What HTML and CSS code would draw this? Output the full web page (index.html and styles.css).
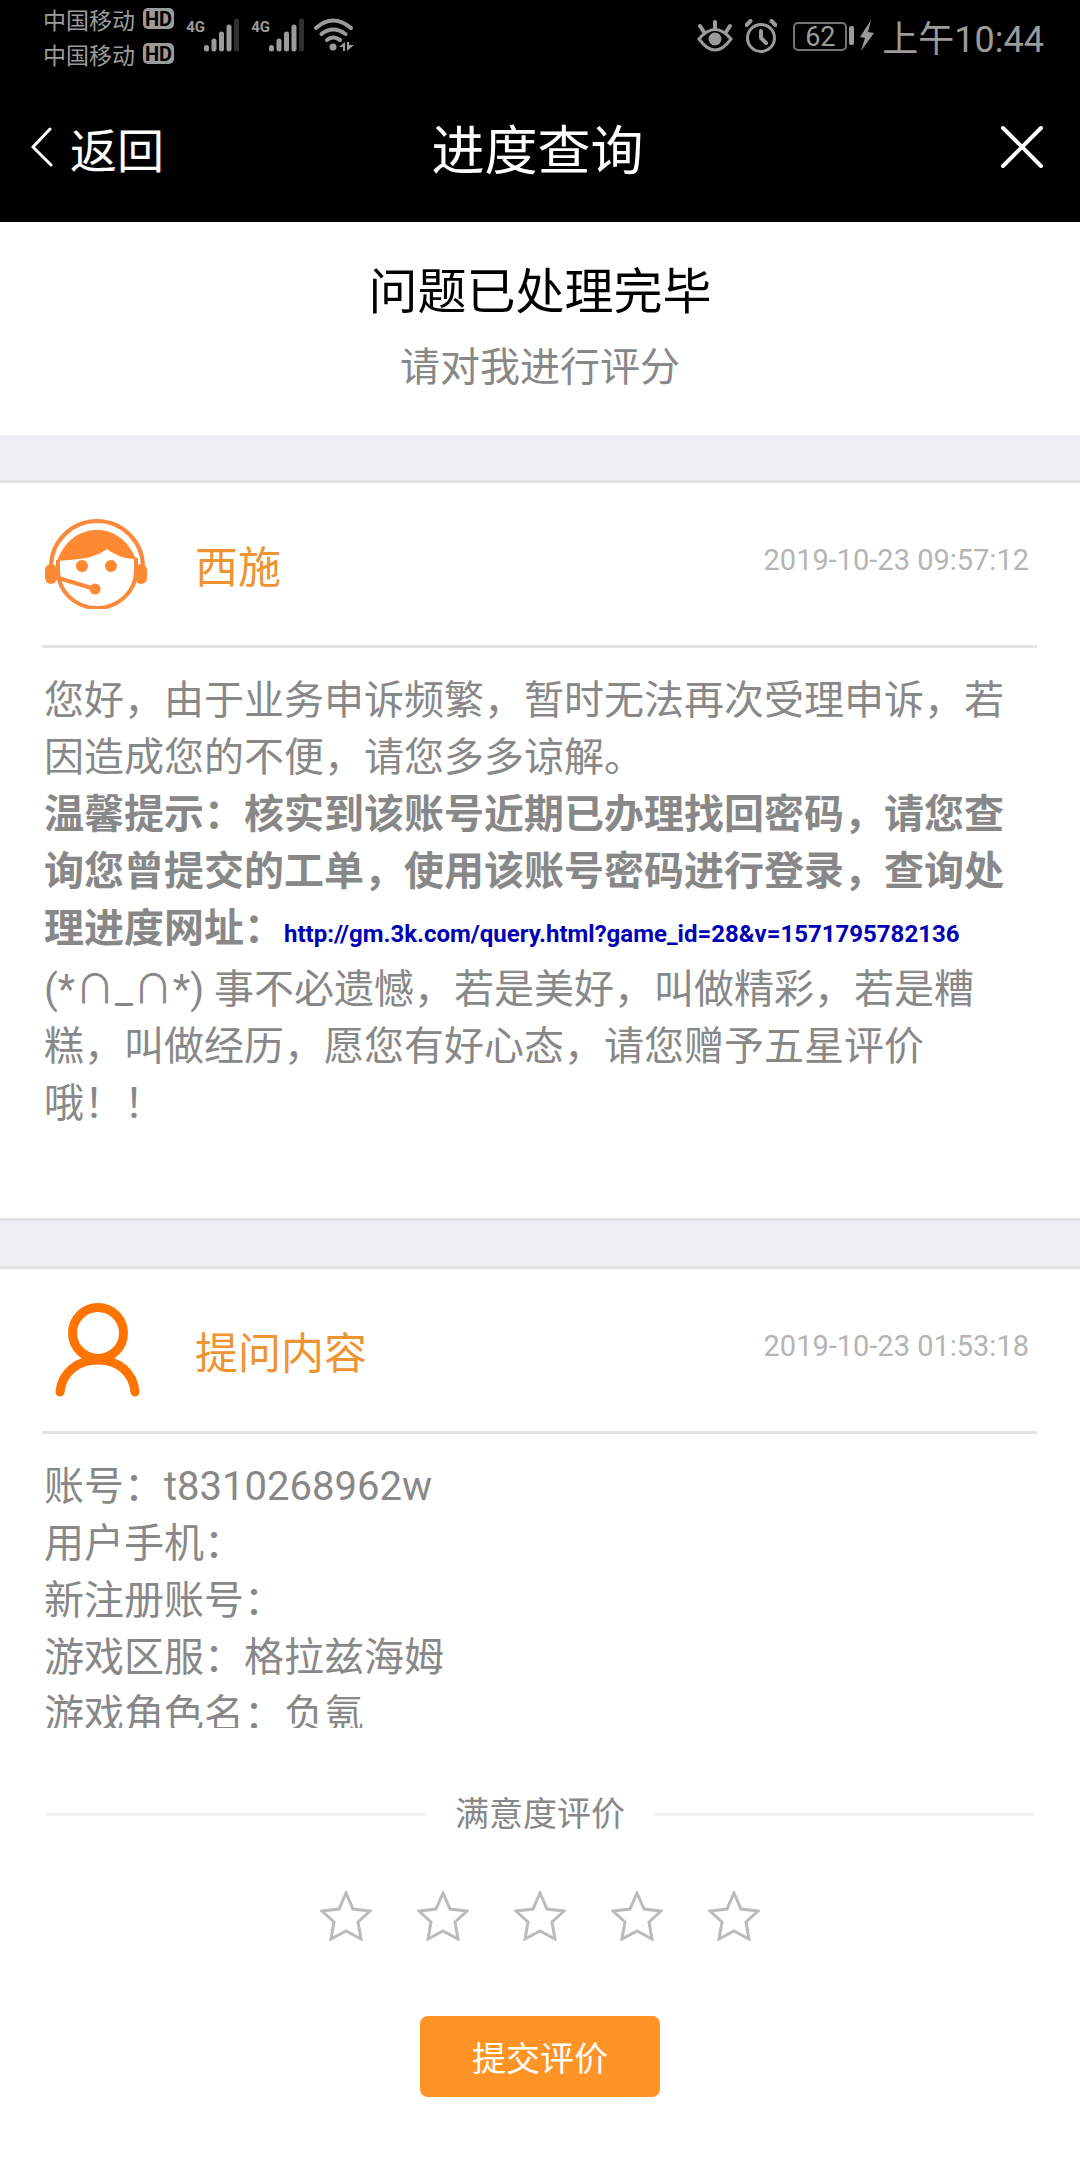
FILE: index.html
```html
<!DOCTYPE html>
<html lang="zh-CN">
<head>
<meta charset="utf-8">
<meta name="viewport" content="width=device-width, initial-scale=1">
<title>进度查询</title>
<link rel="stylesheet" href="styles.css">
</head>
<body>
<div class="status">
  <div class="carriers">
    <div class="carrier">中国移动<span class="hd">HD</span></div>
    <div class="carrier">中国移动<span class="hd">HD</span></div>
  </div>
  <div class="signal">
    <span class="net">4G</span>
    <svg width="35" height="34" viewBox="0 0 35 34" fill="none" stroke="#9b9b9b" stroke-width="5" stroke-linecap="round"><path d="M2.5 29.5v1.500M10 23v8M17.500 16v15M25 9v22"/><path d="M32.500 3v28" stroke="#303030"/></svg>
  </div>
  <div class="signal">
    <span class="net">4G</span>
    <svg width="35" height="34" viewBox="0 0 35 34" fill="none" stroke="#9b9b9b" stroke-width="5" stroke-linecap="round"><path d="M2.5 29.5v1.500M10 23v8M17.500 16v15M25 9v22"/><path d="M32.500 3v28" stroke="#303030"/></svg>
  </div>
  <svg class="wifi" width="40" height="34" viewBox="0 0 40 34" fill="none" stroke="#9b9b9b" stroke-width="4" stroke-linecap="round"><path d="M2 10Q19-5 37 10M7.500 16Q19 7 31.500 16M13 22Q19 17 26 22"/><circle cx="19" cy="29" r="3.500" fill="#9b9b9b" stroke="none"/><path d="M31 24v9h-2v-4h-4zM33 33v-9h2v3l5 0z" fill="#9b9b9b" stroke="none"/></svg>
  <div class="status-right">
    <svg width="40" height="34" viewBox="0 0 40 34" fill="none" stroke="#9b9b9b" stroke-width="3" stroke-linecap="round"><path d="M2 20Q18 1 34 20Q18 42 2 20Z"/><circle cx="18" cy="20" r="6.500" fill="#9b9b9b" stroke="none"/><path d="M18 3v6M3 7l4 6M33 7l-4 6" stroke-width="4"/></svg>
    <svg width="32" height="34" viewBox="0 0 32 34" fill="none" stroke="#9b9b9b" stroke-width="3" stroke-linecap="round"><circle cx="16" cy="19" r="13.500"/><path d="M16 12v7l5 5" stroke-width="4"/><path d="M1.500 6l4-4M30.500 6l-4-4" stroke-width="4"/></svg>
    <div class="battery">
      <span class="level">62</span>
      <svg width="27" height="34" viewBox="0 0 27 34" fill="#9b9b9b"><rect x="2" y="7" width="5" height="19" rx="2"/><path d="M24 1L13 18l5 1-4 13L27 14l-6-1z"/></svg>
    </div>
    <span class="clock">上午10:44</span>
  </div>
</div>
<header class="nav">
  <button class="back" type="button"><svg width="22" height="40" viewBox="0 0 22 40" fill="none" stroke="#fff" stroke-width="3" stroke-linecap="round"><path d="M19 2L2 20l18 18"/></svg>返回</button>
  <h1 class="nav-title">进度查询</h1>
  <button class="close" type="button" aria-label="关闭"><svg width="44" height="44" viewBox="0 0 44 44" stroke="#fff" stroke-width="4" stroke-linecap="round"><path d="M3 3l38 38M41 3L3 41"/></svg></button>
</header>
<main>
  <section class="intro">
    <h2 class="intro-title">问题已处理完毕</h2>
    <p class="intro-sub">请对我进行评分</p>
  </section>
  <section class="card reply">
    <div class="card-head">
      <svg class="avatar" width="102" height="90" viewBox="0 0 102 90" fill="none" stroke="#f98a3c" stroke-width="4"><path d="M6 48a46 46 0 0 1 92 0"/><path d="M13 41V52A39 37 0 0 0 91 52V39"/><path d="M12 42C20 21 35 11 52 11S83 21 91 40C79 40 70 36 62 30C48 40 35 40 12 42Z" fill="#ff8833" stroke="none"/><g fill="#ff8833" stroke="none"><rect y="45" width="12" height="20" rx="6"/><rect x="90" y="45" width="12" height="20" rx="6"/><circle cx="37" cy="47" r="6"/><circle cx="66" cy="47" r="6"/><circle cx="50" cy="70" r="5.500"/></g><path d="M10 58l40 12"/></svg>
      <h3 class="name">西施</h3>
      <time class="time" datetime="2019-10-23T09:57:12">2019-10-23 09:57:12</time>
    </div>
    <div class="text">
      <p>您好，由于业务申诉频繁，暂时无法再次受理申诉，若因造成您的不便，请您多多谅解。</p>
      <p class="tip">温馨提示：核实到该账号近期已办理找回密码，请您查询您曾提交的工单，使用该账号密码进行登录，查询处理进度网址：<a class="link" href="http://gm.3k.com/query.html?game_id=28&amp;v=1571795782136">http://gm.3k.com/query.html?game_id=28&amp;v=1571795782136</a></p>
      <p>(*∩_∩*) 事不必遗憾，若是美好，叫做精彩，若是糟糕，叫做经历，愿您有好心态，请您赠予五星评价哦！！</p>
    </div>
  </section>
  <section class="card">
    <div class="card-head">
      <svg class="avatar" width="102" height="94" viewBox="0 0 102 94" fill="none" stroke="#ff7300" stroke-width="9" stroke-linecap="round"><circle cx="53" cy="30" r="25.500"/><path d="M15 89C17 69 33 57 53 57S88 69 90 89"/></svg>
      <h3 class="name">提问内容</h3>
      <time class="time" datetime="2019-10-23T01:53:18">2019-10-23 01:53:18</time>
    </div>
    <div class="text">
      <div class="question">
        <p>账号：t8310268962w</p>
        <p>用户手机：</p>
        <p>新注册账号：</p>
        <p>游戏区服：格拉兹海姆</p>
        <p>游戏角色名：负氪</p>
      </div>
    </div>
  </section>
  <form class="rating">
    <fieldset class="stars-set">
      <legend class="rating-title">满意度评价</legend>
      <div class="stars">
        <label class="star"><input type="radio" name="score" value="1" aria-label="1星"><svg width="52" height="50" viewBox="0 0 52 50"><path d="M26 2L33 18L50 20L38 31L41 48L26 40L11 48L14 31L2 20L19 18Z"/></svg></label>
        <label class="star"><input type="radio" name="score" value="2" aria-label="2星"><svg width="52" height="50" viewBox="0 0 52 50"><path d="M26 2L33 18L50 20L38 31L41 48L26 40L11 48L14 31L2 20L19 18Z"/></svg></label>
        <label class="star"><input type="radio" name="score" value="3" aria-label="3星"><svg width="52" height="50" viewBox="0 0 52 50"><path d="M26 2L33 18L50 20L38 31L41 48L26 40L11 48L14 31L2 20L19 18Z"/></svg></label>
        <label class="star"><input type="radio" name="score" value="4" aria-label="4星"><svg width="52" height="50" viewBox="0 0 52 50"><path d="M26 2L33 18L50 20L38 31L41 48L26 40L11 48L14 31L2 20L19 18Z"/></svg></label>
        <label class="star"><input type="radio" name="score" value="5" aria-label="5星"><svg width="52" height="50" viewBox="0 0 52 50"><path d="M26 2L33 18L50 20L38 31L41 48L26 40L11 48L14 31L2 20L19 18Z"/></svg></label>
      </div>
    </fieldset>
    <button class="submit" type="submit">提交评价</button>
  </form>
</main>
</body>
</html>
```
FILE: styles.css
```css
*, *::before, *::after { box-sizing: border-box; }
body {
  margin: 0;
  background: #fff;
  color: #888;
  font-family: Roboto, "Noto Sans CJK SC", sans-serif;
  font-size: 40px;
}
h1, h2, h3, p { margin: 0; font-weight: 400; }
button { border: 0; padding: 0; background: none; font-family: inherit; font-weight: 400; }
svg { display: block; flex: none; }

/* system status bar */
.status {
  display: flex;
  align-items: flex-start;
  height: 74px;
  padding: 1px 36px 0 43px;
  background: #000;
  color: #9b9b9b;
}
.carrier {
  display: flex;
  align-items: center;
  gap: 8px;
  height: 35px;
  font-size: 23px;
}
.hd {
  height: 21px;
  padding: 0 2px;
  border-radius: 5px;
  background: #9b9b9b;
  color: #000;
  font-size: 20px;
  font-weight: 700;
  line-height: 22px;
}
.signal { display: flex; margin: 17px 0 0 12px; }
.net { width: 18px; font-size: 15px; font-weight: 700; line-height: 18px; }
.wifi { margin: 17px 0 0 10px; }
.status-right {
  display: flex;
  align-items: center;
  gap: 8px;
  height: 70px;
  margin-left: auto;
}
.battery { display: flex; align-items: center; margin-left: 8px; }
.level {
  width: 54px;
  height: 29px;
  border: 2px solid #757575;
  border-radius: 5px;
  font-size: 27px;
  line-height: 26px;
  text-align: center;
}
.clock { font-size: 36px; }

/* title bar */
.nav {
  display: grid;
  grid-template-columns: 1fr auto 1fr;
  align-items: center;
  height: 148px;
  padding: 0 36px 2px 31px;
  background: #000;
  color: #fff;
}
.back {
  display: flex;
  align-items: center;
  gap: 17px;
  color: #fff;
  font-size: 47px;
}
.nav-title { font-size: 53px; }
.close { justify-self: end; }

.intro {
  display: flex;
  flex-direction: column;
  gap: 9px;
  padding: 35px 0 37px;
  text-align: center;
}
.intro-title { color: #000; font-size: 49px; line-height: 72px; }
.intro-sub { line-height: 60px; }

/* every card opens with the grey band that separates it from the one above */
.card::before {
  content: "";
  display: block;
  height: 48px;
  border-bottom: 3px solid #e3e3e3;
  background: #eeeef3;
}
.card-head {
  display: flex;
  align-items: center;
  height: 165px;
  margin: 0 43px 0 42px;
  padding: 0 8px 0 3px;
  border-bottom: 3px solid #e3e3e3;
}
.reply { border-bottom: 3px solid #e3e3e3; }
.name {
  margin-left: 48px;
  color: #ee9433;
  font-size: 43px;
}
.time { margin-left: auto; padding-bottom: 8px; color: #b5b5b5; font-size: 29px; }
.text { padding: 24px 64px 0 44px; line-height: 57px; }
.reply .text { padding-bottom: 86px; }
.tip { margin-bottom: 4px; font-weight: 700; }
.link { color: #0000b4; font-size: 24px; line-height: 24px; text-decoration: none; }
.question { max-height: 270px; overflow: hidden; }

.rating {
  display: flex;
  flex-direction: column;
  align-items: center;
  gap: 75px;
  padding: 62px 46px;
}
.stars-set { width: 100%; margin: 0; padding: 0; border: 0; }
.rating-title {
  display: flex;
  align-items: center;
  gap: 30px;
  width: 100%;
  padding: 0;
  font-size: 34px;
  line-height: 48px;
}
.rating-title::before, .rating-title::after {
  content: "";
  flex: 1;
  height: 3px;
  background: #f1f1f1;
}
.stars { display: flex; justify-content: center; gap: 45px; margin-top: 53px; }
.star { display: flex; }
.star input { position: absolute; opacity: 0; }
.star svg { fill: none; stroke: #bbb; stroke-width: 3; }
.star input:focus-visible + svg { stroke: #ff9326; }
.submit {
  width: 240px;
  height: 81px;
  border-radius: 8px;
  background: #ff9326;
  color: #fff;
  font-size: 34px;
}
```
